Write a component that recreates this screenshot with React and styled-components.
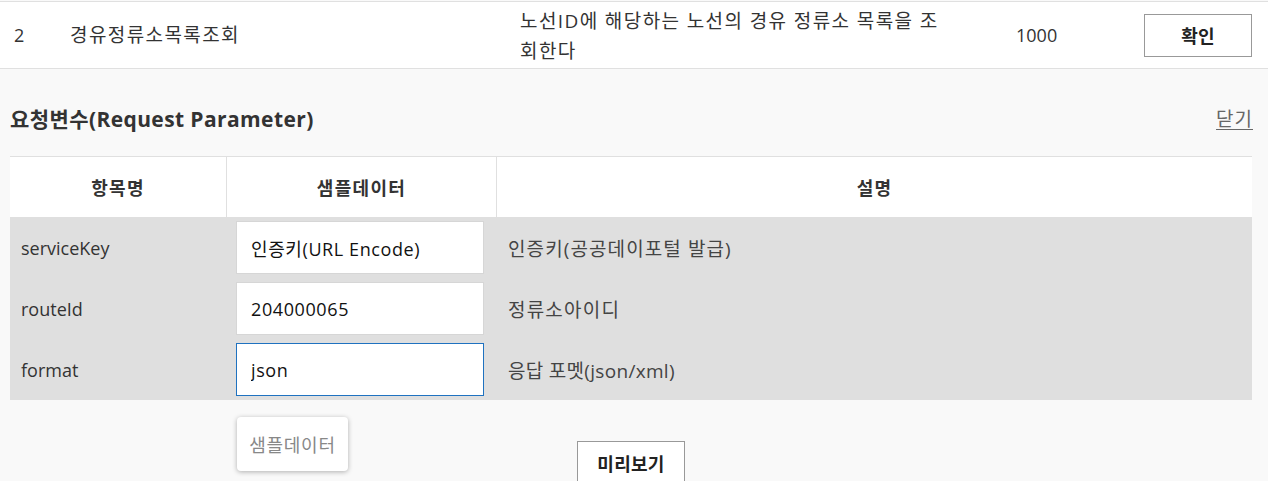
import styled, { createGlobalStyle } from "styled-components";

const GlobalStyle = createGlobalStyle`
  html, body {
    margin: 0;
    padding: 0;
    background: #f9f9f9;
  }
  body {
    font-family: "Open Sans", "Noto Sans CJK KR", sans-serif;
    color: #333;
  }
`;

const Page = styled.div`
  width: 1268px;
  padding-top: 1px;
  background: #f9f9f9;
`;

const ListRow = styled.div`
  display: grid;
  grid-template-columns: 56px 450px 496px 128px 108px;
  align-items: center;
  height: 66px;
  padding: 0 16px 0 14px;
  background: #fff;
  border-top: 1px solid #e0e0e0;
  border-bottom: 1px solid #e0e0e0;
  color: #333;
`;

const Cell = styled.div`
  font-size: ${(p) => p.$size || "18px"};
  line-height: 30px;
  letter-spacing: ${(p) => p.$ls || "0"};
`;

const Desc = styled.div`
  width: 425px;
  font-size: 19px;
  line-height: 30px;
  letter-spacing: 1.4px;
  margin-top: 1px;
`;

const OutlineButton = styled.button`
  width: 108px;
  height: 43px;
  padding: 0;
  background: #fff;
  border: 1px solid #999;
  font-family: inherit;
  font-size: 18px;
  font-weight: 700;
  color: #222;
  letter-spacing: 0.3px;
  cursor: pointer;
`;

const Section = styled.div`
  padding: 0 16px 0 10px;
`;

const Head = styled.div`
  display: flex;
  justify-content: space-between;
  align-items: center;
  padding: 32px 0 21px;
  height: 34px;
`;

const Title = styled.h3`
  margin: 0;
  font-size: 21px;
  font-weight: 700;
  color: #333;
  letter-spacing: 0.4px;
`;

const CloseLink = styled.a`
  margin-right: -1px;
  font-size: 19px;
  color: #666;
  letter-spacing: 1px;
  text-decoration: underline;
  text-underline-offset: 3px;
  cursor: pointer;
`;

const Table = styled.div`
  border-top: 1px solid #e0e0e0;
`;

const TableRow = styled.div`
  display: grid;
  grid-template-columns: 216px 270px 1fr;
  background: ${(p) => (p.$head ? "#fff" : "#dfdfdf")};
  height: ${(p) => (p.$head ? "60px" : "61px")};
`;

const Th = styled.div`
  display: flex;
  align-items: center;
  justify-content: center;
  font-size: 18px;
  font-weight: 700;
  color: #333;
  letter-spacing: 1.3px;
  border-left: ${(p) => (p.$first ? "none" : "1px solid #e0e0e0")};
`;

const Td = styled.div`
  display: flex;
  align-items: center;
  padding: ${(p) => p.$pad || "0 11px"};
  font-size: ${(p) => p.$size || "18px"};
  color: ${(p) => p.$color || "#333"};
  letter-spacing: ${(p) => p.$ls || "0"};
`;

const Input = styled.input`
  box-sizing: border-box;
  width: 248px;
  height: 53px;
  padding: 0 14px;
  border: 1px solid ${(p) => (p.$focused ? "#1f72c0" : "#d6d6d6")};
  outline: none;
  background: #fff;
  font-family: inherit;
  font-size: 18px;
  color: #111;
  letter-spacing: 0.6px;
`;

const Footer = styled.div`
  display: flex;
  align-items: flex-start;
  height: 80px;
  padding: 17px 0 0 227px;
`;

const SampleButton = styled.button`
  width: 111px;
  height: 54px;
  padding: 0;
  background: #fff;
  border: none;
  border-radius: 4px;
  box-shadow: 0 1px 5px rgba(0, 0, 0, 0.3);
  font-family: inherit;
  font-size: 18px;
  color: #888;
  letter-spacing: 0.7px;
  cursor: pointer;
`;

const PreviewButton = styled(OutlineButton)`
  margin: 24px 0 0 229px;
`;

const params = [
  { name: "serviceKey", value: "인증키(URL Encode)", desc: "인증키(공공데이포털 발급)", ls: "1.1px" },
  { name: "routeId", value: "204000065", desc: "정류소아이디", ls: "1.2px" },
  { name: "format", value: "json", desc: "응답 포멧(json/xml)", ls: "0.3px", focused: true },
];

export default function App() {
  return (
    <Page>
      <GlobalStyle />
      <ListRow>
        <Cell>2</Cell>
        <Cell $size="19px" $ls="1.4px">
          경유정류소목록조회
        </Cell>
        <Desc>노선ID에 해당하는 노선의 경유 정류소 목록을 조회한다</Desc>
        <Cell>1000</Cell>
        <OutlineButton>확인</OutlineButton>
      </ListRow>

      <Section>
        <Head>
          <Title>요청변수(Request Parameter)</Title>
          <CloseLink>닫기</CloseLink>
        </Head>

        <Table>
          <TableRow $head>
            <Th $first>항목명</Th>
            <Th>샘플데이터</Th>
            <Th>설명</Th>
          </TableRow>
          {params.map((p) => (
            <TableRow key={p.name}>
              <Td>{p.name}</Td>
              <Td $pad="0 10px">
                <Input defaultValue={p.value} $focused={p.focused} readOnly />
              </Td>
              <Td $pad="0 12px" $color="#444" $size="19px" $ls={p.ls}>
                {p.desc}
              </Td>
            </TableRow>
          ))}
        </Table>

        <Footer>
          <SampleButton>샘플데이터</SampleButton>
          <PreviewButton>미리보기</PreviewButton>
        </Footer>
      </Section>
    </Page>
  );
}
